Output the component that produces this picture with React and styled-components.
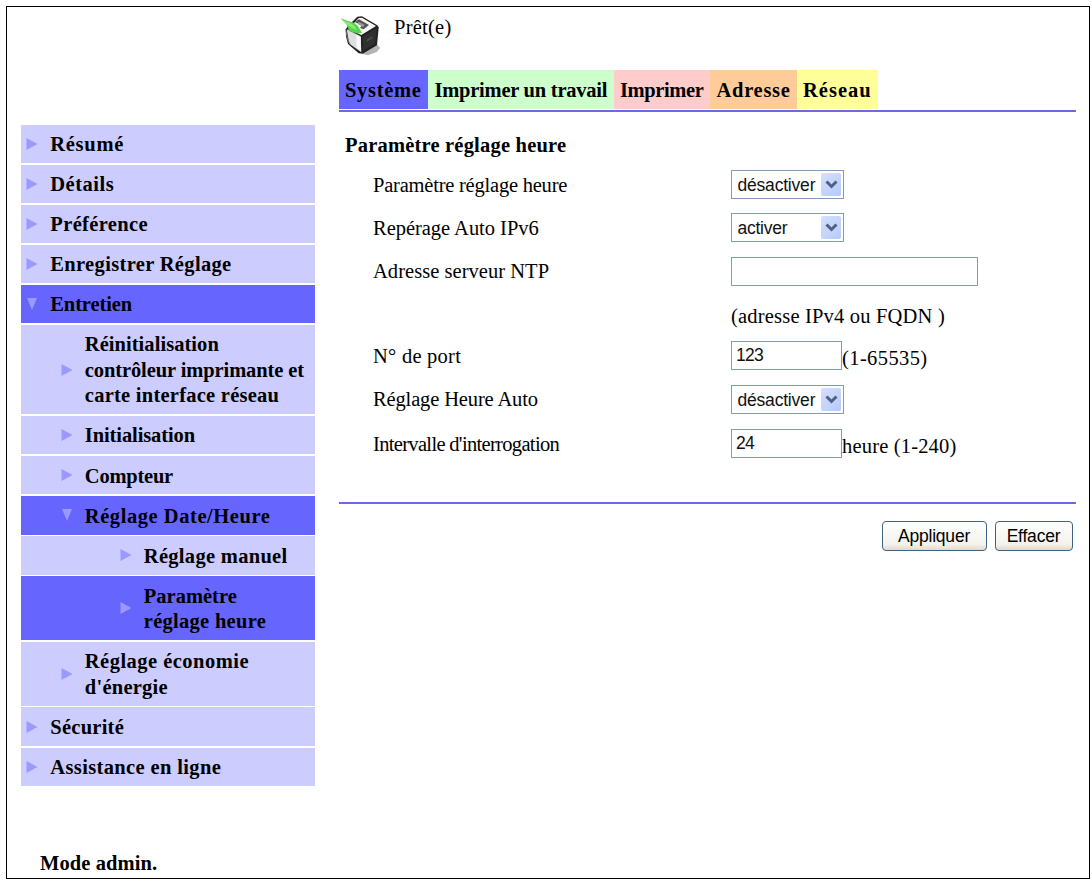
import React from 'react';
import styled, { createGlobalStyle } from 'styled-components';

const menu = [
  { level: 0, lines: [['Résumé', 0.7]] },
  { level: 0, lines: [['Détails', 0.5]] },
  { level: 0, lines: [['Préférence', 0.36]] },
  { level: 0, lines: [['Enregistrer Réglage', 0.34]] },
  { level: 0, active: true, open: true, lines: [['Entretien', -0.12]] },
  {
    level: 1,
    lines: [
      ['Réinitialisation', 0.05],
      ['contrôleur imprimante et', -0.1],
      ['carte interface réseau', 0.25],
    ],
  },
  { level: 1, lines: [['Initialisation', -0.1]] },
  { level: 1, lines: [['Compteur', -0.22]] },
  { level: 1, active: true, open: true, lines: [['Réglage Date/Heure', 0.56]] },
  { level: 2, lines: [['Réglage manuel', 0.3]] },
  { level: 2, active: true, lines: [['Paramètre', 0], ['réglage heure', 0.28]] },
  { level: 1, lines: [['Réglage économie', 0.48], ["d'énergie", 0.25]] },
  { level: 0, lines: [['Sécurité', 0.25]] },
  { level: 0, lines: [['Assistance en ligne', 0.36]] },
];

const tabs = [
  { label: 'Système', color: '#6666ff', width: 89.5, spacing: 0.7 },
  { label: 'Imprimer un travail', color: '#ccffcc', width: 185.5, spacing: -0.24 },
  { label: 'Imprimer', color: '#ffcccc', width: 96.5, spacing: -0.4 },
  { label: 'Adresse', color: '#ffcc99', width: 86.5, spacing: 0.72 },
  { label: 'Réseau', color: '#ffff99', width: 81, spacing: 1.02 },
];

const PrinterIcon = () => (
  <svg width="40" height="41" viewBox="60 45 120 123">
    <path d="M126 162l10-8 36-20 8 10-10 12-26 10z" fill="#b4b4b4" />
    <path d="M84 78l28-28 14-1 46 27 4 6-5 54-43 25-12-1-32-28-6-22-1-22z" fill="#222" />
    <path d="M80 88l42 21 2 48-36-26z" fill="#dedede" />
    <path d="M108 104l14 7 1 42-13-9z" fill="#f8f8f8" />
    <path d="M92 80l24-26 10-1 42 25-44 27-38-17z" fill="#f6f6f6" />
    <path d="M104 66l13-8 30 17-16 13-11-4 6-8z" fill="#555" />
    <path d="M116 65l18 10-5 6-16-9z" fill="#999" />
    <path d="M128 110l42-26-5 46-36 23z" fill="#303030" />
    <path d="M140 119l18-10-1 6-17 10z" fill="#505050" />
    <path d="M62 55l20 7 20 6 12 11 12 20-16 1-22-6-8-20z" fill="#52d44b" />
    <path d="M67 60l19 7 16 9 9 15-15-7-17-11z" fill="#8eea78" />
    <path d="M78 92l5 27 8 15" fill="none" stroke="#777" strokeWidth="3" />
  </svg>
);

const Marker = ({ open }) => (
  <MarkerSvg viewBox="0 0 12 12">
    <path d={open ? 'M1 0h10L6 12z' : 'M0.5 0v12L11.5 6z'} />
  </MarkerSvg>
);

const Select = ({ value, spacing, options = ['activer', 'désactiver'] }) => (
  <SelectBox>
    <SelectInput defaultValue={value} $spacing={spacing}>
      {options.map((option) => (
        <option key={option} value={option}>{option}</option>
      ))}
    </SelectInput>
    <SelectArrow>
      <svg width="13" height="9" viewBox="0 0 13 9">
        <path d="M1.5 1.5l5 5 5-5" fill="none" stroke="#4d6185" strokeWidth="3" />
      </svg>
    </SelectArrow>
  </SelectBox>
);

function App() {
  return (
    <Page>
      <GlobalStyle />
      <Sidebar>
        <Menu>
          {menu.map(({ level, active, open, lines }) => (
            <MenuItem key={lines[0][0]} $level={level} $active={active}>
              <Marker open={open} />
              <MenuText>
                {lines.map(([text, spacing]) => (
                  <MenuLine key={text} $spacing={spacing}>{text}</MenuLine>
                ))}
              </MenuText>
            </MenuItem>
          ))}
        </Menu>
        <Mode>Mode admin.</Mode>
      </Sidebar>

      <Main>
        <Status>
          <PrinterIcon />
          <StatusText>Prêt(e)</StatusText>
        </Status>
        <Tabs>
          {tabs.map(({ label, color, width, spacing }) => (
            <Tab key={label} $color={color} $width={width} $spacing={spacing}>{label}</Tab>
          ))}
        </Tabs>
        <Title>Paramètre réglage heure</Title>
        <Form>
          <Row $height={43}>
            <Label $spacing={-0.22}>Paramètre réglage heure</Label>
            <Select value="désactiver" spacing={-0.2} />
          </Row>
          <Row $height={43}>
            <Label $spacing={-0.03}>Repérage Auto IPv6</Label>
            <Select value="activer" spacing={-0.25} />
          </Row>
          <Row $height={44}>
            <Label $spacing={0.04}>Adresse serveur NTP</Label>
            <Input type="text" $width={247} />
          </Row>
          <Row $height={41}>
            <Label />
            <Hint $spacing={0.19}>(adresse IPv4 ou FQDN )</Hint>
          </Row>
          <Row $height={43}>
            <Label $spacing={0.25}>N° de port</Label>
            <Input type="text" defaultValue="123" $width={111} />
            <Hint $spacing={0.4}>(1-65535)</Hint>
          </Row>
          <Row $height={44}>
            <Label $spacing={-0.14}>Réglage Heure Auto</Label>
            <Select value="désactiver" spacing={-0.2} />
          </Row>
          <Row $height={45}>
            <Label $spacing={-0.67}>Intervalle d&apos;interrogation</Label>
            <Input type="text" defaultValue="24" $width={111} />
            <Hint $spacing={0.18}>heure (1-240)</Hint>
          </Row>
        </Form>
        <Actions>
          <Button type="button" $width={105} $spacing={-0.2}>Appliquer</Button>
          <Button type="button" $width={78} $spacing={-0.2}>Effacer</Button>
        </Actions>
      </Main>
    </Page>
  );
}

export default App;

const GlobalStyle = createGlobalStyle`
  * {
    box-sizing: border-box;
  }
  body {
    margin: 0;
    background: white;
    color: black;
    font-family: "Liberation Serif", "Times New Roman", serif;
    font-size: 20.5px;
    line-height: 25.5px;
  }
`;

const Page = styled.div`
  display: flex;
  width: 1084px;
  height: 873px;
  margin: 6px 0 0 6px;
  padding-left: 14px;
  border: 1px solid black;
  overflow: hidden;
`;

const Sidebar = styled.aside`
  width: 293.5px;
  margin-right: 24px;
  padding-top: 117.5px;
  font-weight: bold;
`;

const Menu = styled.nav`
  display: flex;
  flex-direction: column;
  gap: 1.7px;
`;

const indents = [5, 39.5, 98.5];
const MenuItem = styled.div`
  display: flex;
  align-items: center;
  padding: 5.5px 0 5.4px ${({ $level }) => indents[$level]}px;
  background: ${({ $active }) => ($active ? '#6666ff' : '#ccccff')};
`;

const MarkerSvg = styled.svg`
  flex: none;
  width: 12px;
  height: 12px;
  margin-right: 12.3px;
  fill: #9999ff;
`;

const MenuText = styled.div`
  padding-top: 2px;
`;

const MenuLine = styled.div`
  letter-spacing: ${({ $spacing }) => $spacing}px;
  white-space: nowrap;
`;

const Mode = styled.div`
  margin: 65px 0 0 19px;
  letter-spacing: 0.1px;
`;

const Main = styled.main`
  width: 737px;
`;

const Status = styled.header`
  display: flex;
  align-items: flex-start;
  height: 63px;
  padding: 8px 0 0 1.5px;
`;

const StatusText = styled.div`
  margin: 0 0 0 14px;
  letter-spacing: 0.25px;
`;

const Tabs = styled.nav`
  display: flex;
  height: 42px;
  padding-bottom: 1.5px;
  border-bottom: 2px solid #6f66e8;
`;

const Tab = styled.div`
  flex: none;
  width: ${({ $width }) => $width}px;
  padding-left: 6.5px;
  background: ${({ $color }) => $color};
  font-weight: bold;
  letter-spacing: ${({ $spacing }) => $spacing}px;
  line-height: 40px;
  white-space: nowrap;
`;

const Title = styled.h1`
  margin: 0;
  padding: 21px 0 4.5px 6.5px;
  font-size: 20.5px;
  letter-spacing: 0.2px;
`;

const Form = styled.form`
  height: 341px;
  padding-left: 34.5px;
  border-bottom: 2px solid #6f66e8;
`;

const Row = styled.div`
  display: flex;
  align-items: center;
  height: ${({ $height }) => $height}px;
`;

const Label = styled.label`
  flex: none;
  width: 358px;
  padding-top: 2px;
  letter-spacing: ${({ $spacing }) => $spacing || 0}px;
  white-space: nowrap;
`;

const Hint = styled.span`
  padding-top: 6px;
  letter-spacing: ${({ $spacing }) => $spacing}px;
`;

const SelectBox = styled.div`
  display: flex;
  width: 113px;
  height: 29px;
  padding: 2px;
  border: 1px solid #7f9db9;
`;

const SelectInput = styled.select`
  flex: 1;
  min-width: 0;
  padding: 1px 0 0 3.5px;
  border: 0;
  appearance: none;
  background: white;
  color: #111;
  font: 17.5px "Liberation Sans", Arial, sans-serif;
  letter-spacing: ${({ $spacing }) => $spacing}px;
`;

const SelectArrow = styled.span`
  display: flex;
  align-items: center;
  justify-content: center;
  width: 20px;
  border-radius: 2px;
  background: linear-gradient(135deg, #d5e0fe, #b5c9f9);
`;

const Input = styled.input`
  width: ${({ $width }) => $width}px;
  height: 29px;
  padding: 1px 4px;
  border: 1px solid #7f9db9;
  background: white;
  color: #111;
  font: 17.5px "Liberation Sans", Arial, sans-serif;
  letter-spacing: -0.7px;
`;

const Actions = styled.div`
  display: flex;
  justify-content: flex-end;
  gap: 8px;
  padding: 17px 3px 0 0;
`;

const Button = styled.button`
  width: ${({ $width }) => $width}px;
  height: 30px;
  padding: 0;
  border: 1.5px solid #3f6384;
  border-radius: 4px;
  background: linear-gradient(#ffffff, #f3f2ec 80%, #dedace);
  color: black;
  font: 17.5px "Liberation Sans", Arial, sans-serif;
  letter-spacing: ${({ $spacing }) => $spacing}px;
`;
